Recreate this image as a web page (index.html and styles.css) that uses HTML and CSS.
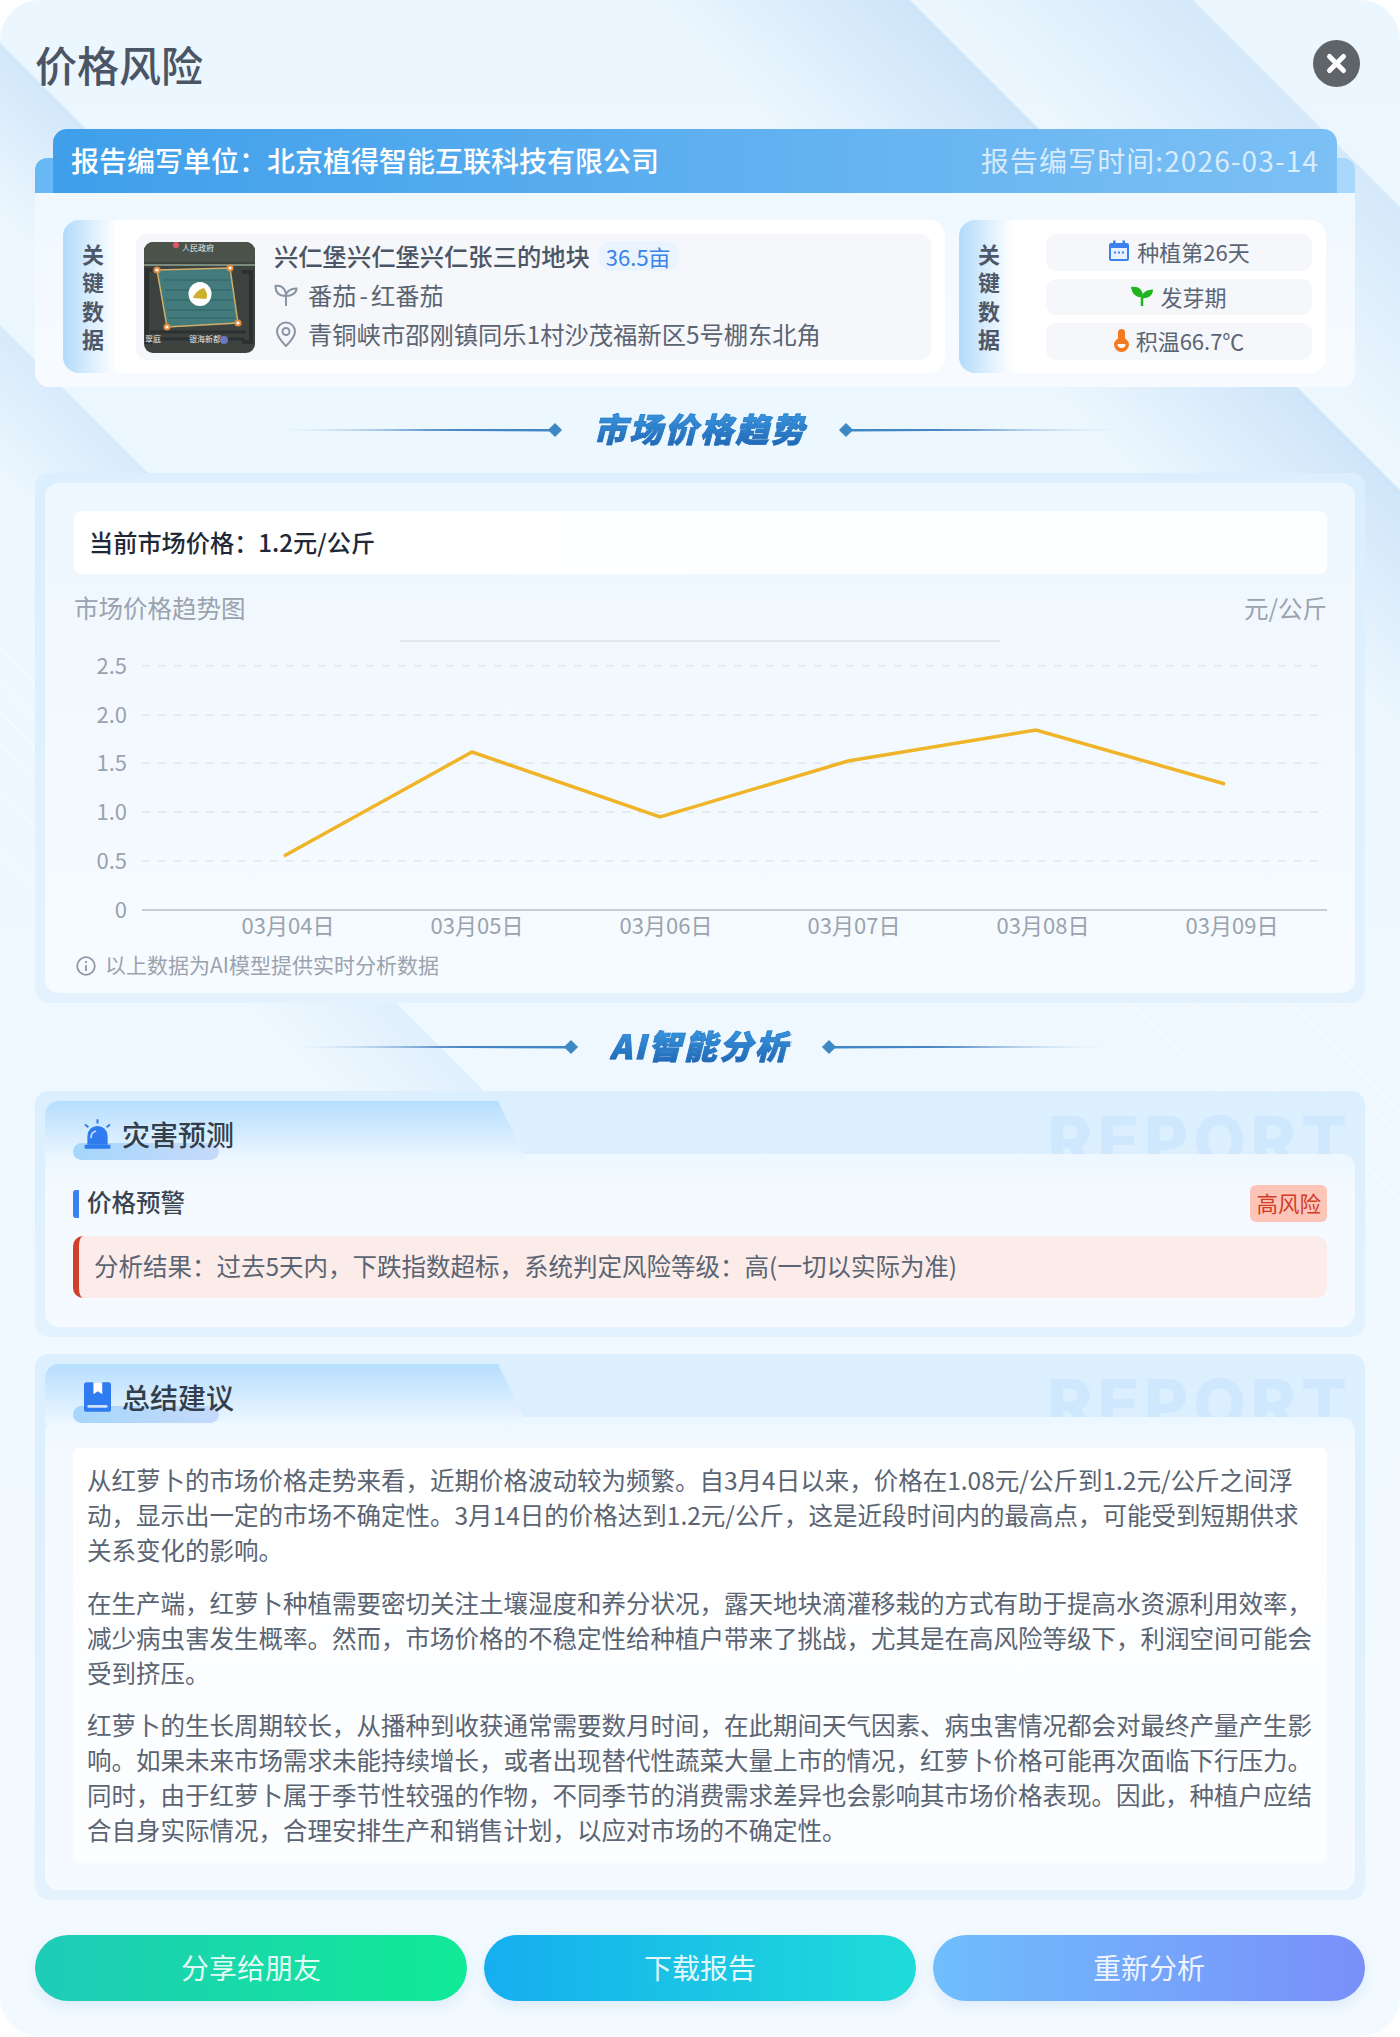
FILE: index.html
```html
<!DOCTYPE html>
<html lang="zh-CN">
<head>
  <meta charset="UTF-8">
  <title>价格风险</title>
  <link rel="stylesheet" href="styles.css">
</head>
<body>
  <div class="page">
    <svg class="deco" width="1400" height="2037" viewBox="0 0 1400 2037">
      <defs>
        <linearGradient id="bandA" gradientUnits="userSpaceOnUse" x1="1296" y1="103" x2="1169" y2="230">
          <stop offset="0" stop-color="#82b9eb" stop-opacity="0.22"/><stop offset="1" stop-color="#82b9eb" stop-opacity="0"/>
        </linearGradient>
        <linearGradient id="bandB" gradientUnits="userSpaceOnUse" x1="1100" y1="190" x2="973" y2="317">
          <stop offset="0" stop-color="#82b9eb" stop-opacity="0.28"/><stop offset="1" stop-color="#82b9eb" stop-opacity="0"/>
        </linearGradient>
        <linearGradient id="bandD" gradientUnits="userSpaceOnUse" x1="60" y1="103" x2="-25" y2="188">
          <stop offset="0" stop-color="#82b9eb" stop-opacity="0.24"/><stop offset="1" stop-color="#82b9eb" stop-opacity="0"/>
        </linearGradient>
        <linearGradient id="bandE" gradientUnits="userSpaceOnUse" x1="75" y1="400" x2="-3" y2="478">
          <stop offset="0" stop-color="#82b9eb" stop-opacity="0.2"/><stop offset="1" stop-color="#82b9eb" stop-opacity="0"/>
        </linearGradient>
        <linearGradient id="bandF" gradientUnits="userSpaceOnUse" x1="440" y1="1047" x2="362" y2="1125">
          <stop offset="0" stop-color="#82b9eb" stop-opacity="0.14"/><stop offset="1" stop-color="#82b9eb" stop-opacity="0"/>
        </linearGradient>
      </defs>
      <polygon points="1193,0 1400,207 1400,600 800,600 800,0" fill="url(#bandA)"/>
      <polygon points="910,0 1400,490 1400,800 600,800 600,0" fill="url(#bandB)"/>
      <polygon points="0,43 330,373 0,373" fill="url(#bandD)"/>
      <polygon points="0,325 170,495 0,495" fill="url(#bandE)"/>
      <polygon points="385,992 500,1107 200,1107 200,992" fill="url(#bandF)"/>
      <g stroke="#ffffff" stroke-width="1.5" opacity="0.45">
        <path d="M0 647L35 683M0 683L35 719M0 712L35 748M0 745L35 781M0 790L35 826M0 850L35 886"/>
        <path d="M1130 1003L1218 1091M1190 1003L1278 1091M1240 1003L1328 1091M1290 1003L1400 1113M1335 1003L1400 1068M1365 1100L1400 1135M1365 1130L1400 1165M1365 1165L1400 1200"/>
      </g>
    </svg>

    <div class="page-head">
      <h1 class="page-title">价格风险</h1>
      <div class="close-btn">
        <svg width="47" height="47" viewBox="0 0 47 47">
          <circle cx="23.5" cy="23.5" r="23.5" fill="#5f6468"/>
          <path d="M16.5 16.5L30.5 30.5M30.5 16.5L16.5 30.5" stroke="#fff" stroke-width="5" stroke-linecap="round"/>
        </svg>
      </div>
    </div>

    <div class="summary">
      <div class="bar-wrap">
        <div class="company-bar">
          <span class="company-name">报告编写单位：北京植得智能互联科技有限公司</span>
          <span class="report-time">报告编写时间:2026-03-14</span>
        </div>
      </div>
      <div class="summary-body">
        <div class="kd-card kd-land">
          <div class="kd-label"><span>关</span><span>键</span><span>数</span><span>据</span></div>
          <div class="land-info">
            <svg class="land-map" width="111" height="111" viewBox="0 0 111 111">
              <rect width="111" height="111" fill="#3d423f"/>
              <rect width="111" height="20" fill="#4a524a"/>
              <path d="M0 23H111" stroke="#7d8a80" stroke-width="2"/>
              <path d="M8 28H3V100H8M98 30H107V100H98" stroke="#2b3033" stroke-width="4" fill="none"/>
              <path d="M6 90H102M6 97H100" stroke="#2b3033" stroke-width="3"/>
              <polygon points="13,28 86,26 94,81 23,85" fill="#437b7d" stroke="#cfae68" stroke-width="1.5"/>
              <path d="M20 38H86M21 48H87M22 58H89M23 68H90M24 76H91" stroke="#3a6d70" stroke-width="2"/>
              <circle cx="13" cy="28" r="3.6" fill="#e08a3c"/><circle cx="13" cy="28" r="1.6" fill="#fff"/>
              <circle cx="86" cy="26" r="3.6" fill="#e08a3c"/><circle cx="86" cy="26" r="1.6" fill="#fff"/>
              <circle cx="94" cy="81" r="3.6" fill="#e08a3c"/><circle cx="94" cy="81" r="1.6" fill="#fff"/>
              <circle cx="23" cy="85" r="3.6" fill="#e08a3c"/><circle cx="23" cy="85" r="1.6" fill="#fff"/>
              <ellipse cx="56" cy="52" rx="11.5" ry="12" fill="#fff"/>
              <path d="M49 56C51 50 56 47 60 46C63 50 64 54 62 57Z" fill="#cdae2d"/>
              <circle cx="32" cy="3" r="3" fill="#e0566a"/>
              <text class="map-text" x="38" y="9">人民政府</text>
              <text class="map-text" x="1" y="100">翠庭</text>
              <text class="map-text" x="45" y="100">银海新都</text>
              <circle cx="80" cy="98" r="4" fill="#6c78b8"/>
            </svg>
            <div class="land-text">
              <div class="land-name">兴仁堡兴仁堡兴仁张三的地块<span class="land-area">36.5亩</span></div>
              <div class="land-row">
                <svg width="24" height="24" viewBox="0 0 24 24" fill="none" stroke="#8a94a3" stroke-width="2">
                  <path d="M12 23V13"/>
                  <path d="M12 13C5 13 1.5 9 1.5 3C8 2 12 6 12 13Z"/>
                  <path d="M12 13C12 9 16 5.5 22.5 5.5C22.5 10 18 13 12 13Z"/>
                </svg>
                <span>番茄<span class="dash">-</span>红番茄</span>
              </div>
              <div class="land-row">
                <svg width="24" height="26" viewBox="0 0 24 26" fill="none" stroke="#8a94a3" stroke-width="2">
                  <path d="M12 25C7 20 3 15 3 10.5A9 9 0 0 1 21 10.5C21 15 17 20 12 25Z"/>
                  <circle cx="12" cy="10.5" r="3.5"/>
                </svg>
                <span>青铜峡市邵刚镇同乐1村沙茂福新区5号棚东北角</span>
              </div>
            </div>
          </div>
        </div>
        <div class="kd-card kd-stats">
          <div class="kd-label"><span>关</span><span>键</span><span>数</span><span>据</span></div>
          <div class="stat-list">
            <div class="stat-item">
              <svg width="22" height="22" viewBox="0 0 22 22">
                <rect x="1" y="3" width="20" height="18" rx="2" fill="#3b82f0"/>
                <rect x="5" y="0.5" width="2.5" height="5" fill="#3b82f0"/>
                <rect x="14.5" y="0.5" width="2.5" height="5" fill="#3b82f0"/>
                <rect x="3" y="8" width="16" height="11" fill="#e8f1fe"/>
                <path d="M6 12.5H8M10 12.5H12M14 12.5H16" stroke="#3b82f0" stroke-width="2"/>
              </svg>
              <span>种植第26天</span>
            </div>
            <div class="stat-item">
              <svg width="22" height="20" viewBox="0 0 22 20">
                <path d="M11 20V10" stroke="#1fb41f" stroke-width="2.5"/>
                <path d="M0 1C7 0 12 3 12 11C5 12 1 8 0 1Z" fill="#1fb41f"/>
                <path d="M10.5 12C11 7 15 3.5 22 3.5C22 9 17.5 13 10.5 12Z" fill="#1fb41f"/>
              </svg>
              <span>发芽期</span>
            </div>
            <div class="stat-item">
              <svg width="15" height="23" viewBox="0 0 15 23">
                <path d="M4 3.5A3.5 3.5 0 0 1 11 3.5V9.5C13.5 11 15 13 15 15.5A7.5 7.5 0 0 1 0 15.5C0 13 1.5 11 4 9.5Z" fill="#f47a1f"/>
                <path d="M3.5 15H11.5A4 4 0 0 1 3.5 15Z" fill="#fff"/>
              </svg>
              <span>积温66.7℃</span>
            </div>
          </div>
        </div>
      </div>
    </div>

    <div class="sec-title">
      <span class="sec-line"></span><span class="sec-diamond"></span>
      <h2 class="sec-text">市场价格趋势</h2>
      <span class="sec-diamond"></span><span class="sec-line sec-line-right"></span>
    </div>

    <div class="panel">
      <div class="panel-inner chart-inner">
        <div class="price-bar"><span>当前市场价格：1.2元/公斤</span></div>
        <div class="chart-head"><span>市场价格趋势图</span><span>元/公斤</span></div>
        <svg class="chart" width="1254" height="320" viewBox="0 0 1254 320">
          <path d="M326 11H926" stroke="#e3e7ea" stroke-width="2"/>
          <g stroke="#dfe6ee" stroke-width="1.5" stroke-dasharray="8 8">
            <path d="M68 36H1253"/><path d="M68 85H1253"/><path d="M68 133H1253"/><path d="M68 182H1253"/><path d="M68 231H1253"/>
          </g>
          <path d="M68 280H1253" stroke="#c9ced6" stroke-width="2"/>
          <g class="axis-y">
            <text x="53" y="34">2.5</text><text x="53" y="83">2.0</text><text x="53" y="131">1.5</text>
            <text x="53" y="180">1.0</text><text x="53" y="229">0.5</text><text x="53" y="278">0</text>
          </g>
          <g class="axis-x">
            <text x="214" y="294">03月04日</text><text x="403" y="294">03月05日</text><text x="592" y="294">03月06日</text>
            <text x="780" y="294">03月07日</text><text x="969" y="294">03月08日</text><text x="1158" y="294">03月09日</text>
          </g>
          <polyline points="210,226 398,122 586,187 774,131 962,100 1151,154" fill="none" stroke="#f0b429" stroke-width="3.5"/>
        </svg>
        <div class="chart-note">
          <svg width="20" height="20" viewBox="0 0 20 20" fill="none" stroke="#8f98a4" stroke-width="1.8">
            <circle cx="10" cy="10" r="8.8"/>
            <path d="M10 9V15M10 5V7"/>
          </svg>
          <span>以上数据为AI模型提供实时分析数据</span>
        </div>
      </div>
    </div>

    <div class="sec-title sec-title-ai">
      <span class="sec-line"></span><span class="sec-diamond"></span>
      <h2 class="sec-text">AI智能分析</h2>
      <span class="sec-diamond"></span><span class="sec-line sec-line-right"></span>
    </div>

    <div class="panel report-card">
      <div class="watermark">REPORT</div>
      <div class="panel-inner">
        <div class="rc-head">
          <svg width="27" height="30" viewBox="0 0 80 88">
            <path d="M10 76V50A30 30 0 0 1 70 50V76Z" fill="#2f7bf0"/>
            <rect x="2" y="76" width="76" height="12" rx="2" fill="#2f7bf0"/>
            <path d="M40 0V13M3 16L13 24M77 16L67 24" stroke="#2f7bf0" stroke-width="6"/>
            <path d="M21 54C21 44 27 38 34 36" stroke="#cfe2fd" stroke-width="5" fill="none" stroke-linecap="round"/>
          </svg>
          <span class="rc-title">灾害预测</span>
        </div>
        <div class="rc-body warn-body">
          <div class="warn-row">
            <span class="warn-title"><span class="warn-label">价格预警</span></span>
            <span class="warn-badge">高风险</span>
          </div>
          <div class="warn-box"><span>分析结果：过去5天内，下跌指数超标，系统判定风险等级：高(一切以实际为准)</span></div>
        </div>
      </div>
    </div>

    <div class="panel report-card">
      <div class="watermark">REPORT</div>
      <div class="panel-inner">
        <div class="rc-head">
          <svg width="27" height="30" viewBox="0 0 80 88">
            <rect width="80" height="88" rx="8" fill="#2f7bf0"/>
            <path d="M28 0H54V36L41 27L28 36Z" fill="#fff"/>
            <rect x="10" y="68" width="60" height="8" rx="4" fill="#cfe2fd"/>
          </svg>
          <span class="rc-title">总结建议</span>
        </div>
        <div class="rc-body advice-body">
          <div class="advice-box">
            <p>从红萝卜的市场价格走势来看，近期价格波动较为频繁。自3月4日以来，价格在1.08元/公斤到1.2元/公斤之间浮<br>动，显示出一定的市场不确定性。3月14日的价格达到1.2元/公斤，这是近段时间内的最高点，可能受到短期供求<br>关系变化的影响。</p>
            <p>在生产端，红萝卜种植需要密切关注土壤湿度和养分状况，露天地块滴灌移栽的方式有助于提高水资源利用效率，<br>减少病虫害发生概率。然而，市场价格的不稳定性给种植户带来了挑战，尤其是在高风险等级下，利润空间可能会<br>受到挤压。</p>
            <p>红萝卜的生长周期较长，从播种到收获通常需要数月时间，在此期间天气因素、病虫害情况都会对最终产量产生影<br>响。如果未来市场需求未能持续增长，或者出现替代性蔬菜大量上市的情况，红萝卜价格可能再次面临下行压力。<br>同时，由于红萝卜属于季节性较强的作物，不同季节的消费需求差异也会影响其市场价格表现。因此，种植户应结<br>合自身实际情况，合理安排生产和销售计划，以应对市场的不确定性。</p>
          </div>
        </div>
      </div>
    </div>

    <div class="actions">
      <button class="action-btn btn-share">分享给朋友</button>
      <button class="action-btn btn-download">下载报告</button>
      <button class="action-btn btn-retry">重新分析</button>
    </div>
  </div>
</body>
</html>
```

FILE: styles.css
```css
* { box-sizing: border-box; }
html, body { margin: 0; padding: 0; background: #fff; }
body {
  font-family: "Noto Sans CJK SC", "Noto Sans", sans-serif;
  color: #5a6472;
}

.page {
  position: relative;
  width: 1400px;
  height: 2037px;
  padding: 0 35px;
  overflow: hidden;
  border-radius: 40px;
  background: linear-gradient(180deg, #ebf6fe 0%, #eff8ff 50%, #f3faff 100%);
}
/* diagonal bands and thin white lines behind everything */
.deco { position: absolute; left: 0; top: 0; }

.page-head {
  position: relative;
  height: 129px;
  display: flex;
  justify-content: space-between;
  align-items: center;
  padding: 0 5px 3px 0;
}
.page-title {
  margin: 0;
  font-size: 42px;
  font-weight: 500;
  color: #4a5565;
}
.close-btn { height: 47px; }

/* report summary */
.summary { position: relative; margin-right: 10px; }
.bar-wrap { position: relative; height: 64px; padding: 0 18px; }
.bar-wrap::before {
  content: "";
  position: absolute;
  left: 0;
  right: 0;
  bottom: 0;
  height: 35px;
  border-radius: 12px 12px 0 0;
  background: linear-gradient(90deg, #68b8f6, #a8d8fd);
}
.company-bar {
  position: relative;
  height: 64px;
  padding: 0 18px 2px;
  display: flex;
  justify-content: space-between;
  align-items: center;
  border-radius: 14px 14px 0 0;
  background: linear-gradient(90deg, #3f9fea, #7cc0f5);
  color: #fff;
  font-size: 28px;
}
.company-name { font-weight: 500; }
.report-time { color: rgba(255,255,255,0.72); letter-spacing: 1.1px; }
.summary-body {
  height: 194px;
  padding: 27px 29px 14px 28px;
  display: flex;
  gap: 14px;
  border-radius: 0 0 14px 14px;
  background: linear-gradient(180deg, #eff8ff, #f7fbff);
}
.kd-card {
  display: flex;
  height: 153px;
  padding: 14px 14px 13px 0;
  border-radius: 16px;
  background: linear-gradient(90deg, #b3dbfb 0, #ffffff 54px);
}
.kd-land { width: 882px; gap: 13px; }
.kd-stats { width: 367px; gap: 27px; }
.kd-label {
  width: 60px;
  padding-bottom: 3px;
  display: flex;
  flex-direction: column;
  justify-content: center;
  align-items: center;
  font-size: 22px;
  font-weight: 700;
  line-height: 28.3px;
  color: #4d5868;
}
.land-info {
  flex: 1;
  display: flex;
  align-items: center;
  gap: 19px;
  padding: 0 8px;
  border-radius: 10px;
  background: #f5f7fa;
}
.land-map { border-radius: 9px; flex: none; }
.map-text { font-size: 8px; fill: #e8eaec; }
.land-text { margin-top: -5px; }
.land-name {
  height: 39px;
  display: flex;
  align-items: center;
  font-size: 24.3px;
  font-weight: 500;
  color: #4a5565;
}
.land-area {
  margin-left: 8px;
  padding: 0 8px;
  border-radius: 14px;
  background: #eaf4fe;
  color: #3b82e8;
  font-size: 22px;
  font-weight: 400;
  line-height: 30px;
}
.land-row {
  height: 39px;
  display: flex;
  align-items: center;
  gap: 10px;
  font-size: 24.3px;
}
.dash { padding: 0 3px; }
.stat-list {
  flex: 1;
  display: flex;
  flex-direction: column;
  gap: 8px;
}
.stat-item {
  flex: 1;
  padding-bottom: 3px;
  display: flex;
  justify-content: center;
  align-items: center;
  gap: 7px;
  border-radius: 10px;
  background: #f5f7fa;
  font-size: 22px;
}

/* section headings */
.sec-title {
  position: relative;
  height: 86px;
  display: flex;
  justify-content: center;
  align-items: center;
}
.sec-title-ai { height: 88px; }
.sec-line {
  width: 275px;
  height: 3px;
  background: linear-gradient(90deg, rgba(62,136,196,0.2), #4a84c4 55%, #3e88c4);
  clip-path: polygon(0 50%, 100% 0, 100% 100%);
}
.sec-line-right { transform: scaleX(-1); }
.sec-diamond {
  width: 10px;
  height: 10px;
  transform: rotate(45deg);
  background: #3e88c4;
}
.sec-text {
  margin: 0 34px;
  padding-bottom: 4px;
  font-size: 33px;
  font-weight: 900;
  font-style: italic;
  letter-spacing: 2.5px;
  -webkit-text-stroke: 0.8px rgba(30,110,190,0.55);
  background: linear-gradient(180deg, #3fa2ea, #1a5aa8);
  -webkit-background-clip: text;
  background-clip: text;
  color: transparent;
}

/* panels */
.panel {
  position: relative;
  padding: 10px;
  border-radius: 14px;
  background: linear-gradient(180deg, #dbeffe, #e4f2fe);
}
.panel-inner {
  position: relative;
  border-radius: 14px;
  background: linear-gradient(180deg, #eef7fe, #f6fbff);
}
.chart-inner { height: 510px; padding: 28px 28px 0 29px; }
.price-bar {
  height: 63px;
  padding: 0 0 3px 15px;
  display: flex;
  align-items: center;
  border-radius: 8px;
  background: linear-gradient(90deg, #ffffff, #fcfeff);
  font-size: 24.2px;
  font-weight: 500;
  color: #1f2937;
}
.chart-head {
  height: 34px;
  margin-top: 17px;
  display: flex;
  justify-content: space-between;
  font-size: 24.5px;
  line-height: 34px;
  color: #9aa3ae;
}
.chart { display: block; margin-top: 5px; }
.chart text { font-size: 22px; fill: #9aa3ae; dominant-baseline: central; }
.axis-y text { text-anchor: end; }
.axis-x text { text-anchor: middle; }
.chart-note {
  height: 32px;
  display: flex;
  align-items: center;
  gap: 9px;
  padding-left: 2px;
  font-size: 21px;
  color: #9aa3ae;
}
.chart-note span { margin-top: -4px; }

/* report cards */
.report-card + .report-card { margin-top: 17px; }
.watermark {
  position: absolute;
  right: 13px;
  top: 13px;
  font-family: Inter, "Noto Sans", sans-serif;
  font-size: 68px;
  font-weight: 800;
  letter-spacing: 5px;
  line-height: 72px;
  color: #cfe8fe;
}
.report-card .panel-inner { background: transparent; }
.rc-head {
  position: relative;
  z-index: 2;
  height: 53px;
  padding: 17px 0 0 39px;
  display: flex;
  gap: 11px;
}
.rc-head::before {
  content: "";
  position: absolute;
  left: 0;
  top: 0;
  width: 482px;
  height: 60px;
  border-radius: 14px 0 0 0;
  background: linear-gradient(180deg, #b6defe, #eef7ff);
  clip-path: polygon(0 0, 94% 0, 100% 100%, 0 100%);
}
.rc-head::after {
  content: "";
  position: absolute;
  left: 28px;
  top: 42px;
  width: 146px;
  height: 17px;
  border-radius: 9px;
  background: linear-gradient(90deg, #a5d6fb, #c6dafa);
}
.rc-head svg { position: relative; z-index: 1; margin-top: 1px; }
.rc-title {
  position: relative;
  z-index: 1;
  font-size: 28px;
  font-weight: 500;
  line-height: 32px;
  color: #333e4c;
}
.rc-body {
  position: relative;
  border-radius: 14px;
  background: linear-gradient(180deg, #ecf7ff, #f4faff 40px);
}
.warn-body { height: 173px; padding: 31px 28px 0 28px; }
.warn-row {
  height: 37px;
  display: flex;
  justify-content: space-between;
  align-items: center;
}
.warn-title {
  height: 28px;
  padding-left: 8px;
  border-left: 6px solid #3b82f0;
  border-radius: 3px;
  font-size: 24.5px;
  font-weight: 500;
  line-height: 28px;
  color: #3a4553;
}
.warn-label { position: relative; top: -2px; }
.warn-badge {
  padding: 0 6px 2px;
  border-radius: 6px;
  background: #fdc4b8;
  color: #d03d26;
  font-size: 21.5px;
  line-height: 35px;
}
.warn-box {
  height: 62px;
  margin-top: 14px;
  padding: 0 0 3px 15px;
  display: flex;
  align-items: center;
  border-left: 6px solid #d0412c;
  border-radius: 10px;
  background: #fbecea;
  font-size: 24.5px;
}
.advice-body { height: 473px; padding: 31px 28px 0 28px; }
.advice-box {
  height: 415px;
  padding: 14px 0 0 14px;
  border-radius: 6px;
  background: linear-gradient(180deg, #ffffff, #fbfdff);
  font-size: 24.5px;
  line-height: 35px;
}
.advice-box p { margin: 0 0 17.5px; }

/* bottom buttons */
.actions {
  position: relative;
  margin-top: 35px;
  display: flex;
  gap: 17px;
}
.action-btn {
  flex: 1;
  height: 66px;
  padding: 0 0 3px;
  border: none;
  border-radius: 33px;
  font-family: inherit;
  font-size: 28px;
  color: rgba(255,255,255,0.9);
  box-shadow: 0 6px 14px rgba(120,170,220,0.18);
}
.btn-share { background: linear-gradient(90deg, #1ecbb8, #11ea96); }
.btn-download { background: linear-gradient(90deg, #16aef0, #1fdcd8); }
.btn-retry { background: linear-gradient(90deg, #6fbefc, #7a8ffa); }
```
